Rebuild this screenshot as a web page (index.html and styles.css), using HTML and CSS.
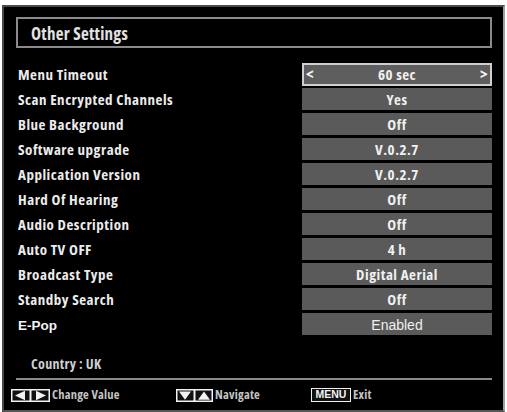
FILE: index.html
```html
<!DOCTYPE html>
<html>
<head>
<meta charset="utf-8">
<link rel="stylesheet" href="styles.css">
</head>
<body>
<div class="screen">
  <div class="title-box"><span class="title">Other Settings</span></div>
  <div class="rows">
    <div class="row"><span class="label">Menu Timeout</span><div class="value selected"><span class="arr">&lt;</span><span>60 sec</span><span class="arr">&gt;</span></div></div>
    <div class="row"><span class="label">Scan Encrypted Channels</span><div class="value">Yes</div></div>
    <div class="row"><span class="label">Blue Background</span><div class="value">Off</div></div>
    <div class="row"><span class="label">Software upgrade</span><div class="value">V.0.2.7</div></div>
    <div class="row"><span class="label">Application Version</span><div class="value">V.0.2.7</div></div>
    <div class="row"><span class="label">Hard Of Hearing</span><div class="value">Off</div></div>
    <div class="row"><span class="label">Audio Description</span><div class="value">Off</div></div>
    <div class="row"><span class="label">Auto TV OFF</span><div class="value">4 h</div></div>
    <div class="row"><span class="label">Broadcast Type</span><div class="value">Digital Aerial</div></div>
    <div class="row"><span class="label">Standby Search</span><div class="value">Off</div></div>
    <div class="row"><span class="label plain">E-Pop</span><div class="value plain-val">Enabled</div></div>
  </div>
  <div class="country">Country : UK</div>
  <div class="sep"></div>
  <div class="footer">
    <div class="group g1">
      <svg class="icon" width="39" height="13" viewBox="0 0 39 13">
        <rect x="0.75" y="0.75" width="37.5" height="11.5" fill="#111" stroke="#f2f2f2" stroke-width="1.5"/>
        <line x1="19.5" y1="0" x2="19.5" y2="13" stroke="#f2f2f2" stroke-width="2"/>
        <polygon points="4,6.5 14,1.8 14,11.2" fill="#f2f2f2"/>
        <polygon points="25,1.8 25,11.2 35,6.5" fill="#f2f2f2"/>
      </svg>
      <span class="ftext">Change Value</span>
    </div>
    <div class="group g2">
      <svg class="icon" width="37" height="13" viewBox="0 0 37 13">
        <rect x="0.75" y="0.75" width="35.5" height="11.5" fill="#111" stroke="#f2f2f2" stroke-width="1.5"/>
        <line x1="18.5" y1="0" x2="18.5" y2="13" stroke="#f2f2f2" stroke-width="2"/>
        <polygon points="3,2.5 15,2.5 9,10.8" fill="#f2f2f2"/>
        <polygon points="22,10.8 34,10.8 28,2.5" fill="#f2f2f2"/>
      </svg>
      <span class="ftext">Navigate</span>
    </div>
    <div class="group g3">
      <span class="menu-key">MENU</span>
      <span class="ftext">Exit</span>
    </div>
  </div>
</div>
</body>
</html>
```
FILE: styles.css
```css
html, body {
  margin: 0;
  padding: 0;
  background: #ffffff;
}
body {
  width: 507px;
  height: 412px;
  overflow: hidden;
}
.screen {
  box-sizing: border-box;
  margin: 5px 0 0 2px;
  width: 503px;
  height: 407px;
  background: #000;
  border: 2px solid #4a4a4a;
  border-right: 2px solid #a0a0a0;
  border-bottom-color: #555;
  padding: 10px 11px 0 12px;
  font-family: "Open Sans", "DejaVu Sans Condensed", sans-serif;
  font-stretch: 87.5%;
  font-weight: bold;
  color: #ececec;
}
.title-box {
  box-sizing: border-box;
  height: 31px;
  border: 2px solid #8a8a8a;
  display: flex;
  align-items: center;
  padding: 2px 0 0 13px;
}
.title {
  font-size: 17px;
  letter-spacing: 0.25px;
  line-height: 20px;
  color: #e2e2e2;
}
.rows {
  margin-top: 15px;
  display: flex;
  flex-direction: column;
}
.row {
  display: flex;
  height: 25px;
  align-items: flex-start;
}
.label {
  flex: 0 0 284px;
  padding: 0 0 0 2px;
  font-size: 15px;
  letter-spacing: 0.5px;
  line-height: 22px;
  height: 22px;
  white-space: nowrap;
}
.label.plain {
  font-family: "Liberation Sans", Arial, sans-serif;
  font-stretch: normal;
  letter-spacing: 0;
  font-size: 13.5px;
  padding-top: 2px;
  height: 20px;
  color: #f4f4f4;
}
.value {
  box-sizing: border-box;
  flex: 1;
  height: 22px;
  line-height: 22px;
  font-size: 15px;
  letter-spacing: 0.5px;
  text-align: center;
  background: #5a5a5a;
  color: #f0f0f0;
  white-space: nowrap;
}
.value.plain-val {
  font-family: "Liberation Sans", Arial, sans-serif;
  font-stretch: normal;
  font-weight: normal;
  letter-spacing: 0;
  font-size: 14px;
  padding-top: 1px;
}
.value.selected {
  height: 23px;
  padding: 0 2px;
  line-height: 19px;
  border: 2px solid #cfcfcf;
  background: #5e5e5e;
  display: flex;
  justify-content: space-between;
}
.arr {
  font-size: 16px;
  color: #f6f6f6;
}
.country {
  margin-top: 16px;
  padding-left: 15px;
  font-size: 14px;
  letter-spacing: 0.3px;
  line-height: 20px;
  color: #cfcfcf;
}
.sep {
  margin-top: 4px;
  height: 2px;
  background: #8a8a8a;
}
.footer {
  margin: 8px 0 0 -5px;
  display: flex;
  align-items: center;
  height: 14px;
}
.group {
  display: flex;
  align-items: center;
  gap: 2px;
}
.g1 { width: 165px; }
.g2 { width: 135px; }
.icon {
  display: block;
}
.ftext {
  font-size: 12.5px;
  letter-spacing: 0.2px;
  line-height: 14px;
  color: #c4c4c4;
}
.menu-key {
  box-sizing: border-box;
  width: 40px;
  height: 14px;
  border: 1.5px solid #f0f0f0;
  background: #111;
  font-family: "Liberation Sans", Arial, sans-serif;
  font-stretch: normal;
  font-size: 10.5px;
  line-height: 11px;
  text-align: center;
  color: #f4f4f4;
}
```
